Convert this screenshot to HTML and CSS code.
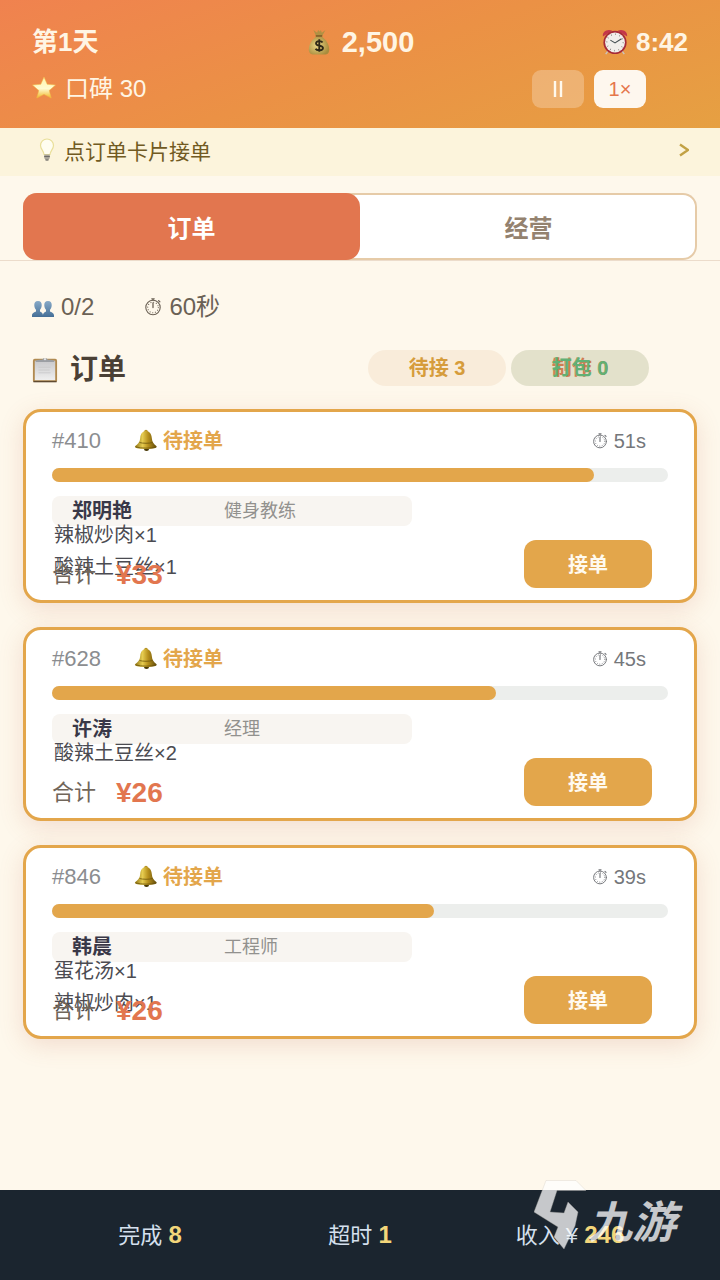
FILE: index.html
```html
<!DOCTYPE html>
<html lang="zh-CN">
<head>
<meta charset="utf-8">
<meta name="viewport" content="width=device-width, initial-scale=1">
<title>订单</title>
<link rel="stylesheet" href="styles.css">
</head>
<body>
<svg class="defs" aria-hidden="true">
  <defs>
    <linearGradient id="gold" x1="0" y1="0" x2="1" y2="0">
      <stop offset="0" stop-color="#8f7415"/><stop offset=".35" stop-color="#e6cc50"/><stop offset=".6" stop-color="#b8911c"/><stop offset="1" stop-color="#5f4a0c"/>
    </linearGradient>
    <linearGradient id="star" x1="0" y1="0" x2="0" y2="1">
      <stop offset="0" stop-color="#fff3a8"/><stop offset=".55" stop-color="#fffbd0"/><stop offset="1" stop-color="#f2b72c"/>
    </linearGradient>
    <linearGradient id="blue" x1="0" y1="0" x2="0" y2="1">
      <stop offset="0" stop-color="#88aac8"/><stop offset="1" stop-color="#456f97"/>
    </linearGradient>
    <linearGradient id="paper" x1="0" y1="0" x2="0" y2="1">
      <stop offset="0" stop-color="#c9c9cb"/><stop offset="1" stop-color="#efefef"/>
    </linearGradient>
    <radialGradient id="bag" cx=".4" cy=".5" r=".6">
      <stop offset="0" stop-color="#e9d585"/><stop offset="1" stop-color="#a98c3c"/>
    </radialGradient>
  </defs>
  <symbol id="i-bell" viewBox="0 0 24 24">
    <ellipse cx="12.500" cy="19.500" rx="2.500" ry="2.500" fill="#493906"/>
    <circle cx="12" cy="2.500" r="1.800" fill="#b59426"/>
    <path d="M12 2C8.500 2 6.500 5 6.200 9c-.3 4-2.200 6-4.900 8-.8.800-.3 1.600 1 1.900 5 1.400 14 1.400 19 0 1.300-.3 1.800-1.100 1-1.900-2.500-2-4.200-4-4.500-8-.3-4-2.300-7-5.800-7z" fill="url(#gold)"/>
    <path d="M2 18c5 1.500 15 1.500 20 0M5.500 13.500c3 1 10 1 13 0" fill="none" stroke="#6d550b" stroke-width=".8"/>
  </symbol>
  <symbol id="i-watch" viewBox="0 0 18 18">
    <g fill="none" stroke="currentColor" stroke-linecap="round">
      <circle cx="9" cy="9.500" r="7.200" stroke-width="1.100"/>
      <path d="M9 9.500V5M7.800 .8h2.400M9 .8v1.500M14.600 2.600l1.200 1.200" stroke-width="1.300"/>
      <circle cx="9" cy="9.500" r="5.300" stroke-width="1.100" stroke-dasharray=".1 2.675"/>
    </g>
  </symbol>
</svg>

<header class="topbar">
  <div class="topbar-row">
    <strong class="day">第1天</strong>
    <strong class="money">
      <svg class="icon-28" viewBox="0 0 28 28" aria-hidden="true">
        <path d="M8 1l4 3 1-3 2 2 1-2 1 3 4-3-4 7h-6z" fill="#b09143"/>
        <path d="M11 8h6c4 3 8 8 8 14 0 4-2 5.500-5 5.500H8.500c-3 0-5.500-1.500-5.500-5.500C3 16 7 11 11 8z" fill="url(#bag)"/>
        <path d="M10.500 7.500h7" stroke="#7b5a25" stroke-width="1.600"/>
        <path d="M17.800 14.500c-1-2-7-2.200-7 1 0 3.300 7.500 1.700 7.500 5 0 3.200-6.800 3.200-8 .8M14.300 11v13.500" fill="none" stroke="#2f2817" stroke-width="2"/>
      </svg>
      <span>2,500</span>
    </strong>
    <strong class="clock">
      <svg class="icon-28" viewBox="0 0 28 28" aria-hidden="true">
        <path d="M7 23l-3 4M21 23l3 4" stroke="#c9c3c0" stroke-width="1.500"/>
        <path d="M1 8c-1-5 5-8.500 10-6zM27 8c1-5-5-8.500-10-6z" fill="#c4374a"/>
        <circle cx="14" cy="14.500" r="12.500" fill="#a62b38"/>
        <circle cx="14" cy="14.500" r="10.700" fill="#f1eeea"/>
        <circle cx="14" cy="14.500" r="8.800" fill="none" stroke="#77706e" stroke-width="1.600" stroke-dasharray=".7 3.908"/>
        <path d="M9 12l5 3 7-4.500" fill="none" stroke="#444f52" stroke-width="1.200"/>
      </svg>
      <span>8:42</span>
    </strong>
  </div>
  <div class="topbar-row">
    <span class="reputation">
      <svg class="icon-24" viewBox="0 0 24 24" aria-hidden="true"><path d="M12 0l3.200 7.300 8.300.7-6.300 5.500 2 7.500L12 17.300 4.800 21l2-7.500L.5 8l8.300-.7z" fill="url(#star)" stroke="#f0bd45" stroke-width=".5"/></svg>
      <span>口碑 30</span>
    </span>
    <div class="speed">
      <button class="speed-btn" type="button" aria-label="暂停"><svg class="pause" viewBox="0 0 10 16" aria-hidden="true"><path d="M2 0v16M8 0v16" stroke="#fff9ed" stroke-width="2.400"/></svg></button>
      <button class="speed-btn speed-btn-on" type="button">1×</button>
    </div>
  </div>
</header>

<button class="hint" type="button">
  <svg class="icon-24" viewBox="0 0 24 24" aria-hidden="true">
    <path d="M12 1a6.500 6.500 0 0 0-6.500 6.500c0 3.500 3 5 3.500 9h6c.5-4 3.500-5.500 3.500-9A6.500 6.500 0 0 0 12 1z" fill="#fffdf0" stroke="#e9df9a" stroke-width="1.200"/>
    <path d="M9.200 16.500h5.600v3.500L13 22.500h-2L9.200 20z" fill="#aaa59a"/>
    <path d="M9.200 18.500h5.600M10.500 22h3" stroke="#6e6b66"/>
  </svg>
  <span class="hint-text">点订单卡片接单</span>
  <svg class="chevron" viewBox="0 0 10 14" aria-hidden="true"><path d="M1 1.500l8 5.500-8 5.500" fill="none" stroke="#c2a144" stroke-width="2.400"/></svg>
</button>

<nav class="tabs-bar">
  <div class="tabs">
    <button class="tab tab-active" type="button">订单</button>
    <button class="tab" type="button">经营</button>
  </div>
</nav>

<main class="content">
  <div class="stats">
    <span class="stat">
      <svg class="icon-22" viewBox="0 0 22 22" aria-hidden="true">
        <path d="M6 5c-2.700 0-4 2-3.700 4.500.2 2 .8 3.500 1.700 4.300v1.700c-1 .8-4 1-4 4V21h11v-1.500c0-3-2-3.200-3-4v-1.700c.9-.8 1.500-2.300 1.700-4.300C10 7 8.700 5 6 5z" fill="url(#blue)"/>
        <path d="M16 5c-2.700 0-4 2-3.700 4.500.2 2 .8 3.500 1.700 4.300v1.700c-1 .8-3 1-3 4V21h11v-1.500c0-3-3-3.200-4-4v-1.700c.9-.8 1.500-2.300 1.700-4.300C20 7 18.700 5 16 5z" fill="url(#blue)"/>
      </svg>
      <span>0/2</span>
    </span>
    <span class="stat">
      <svg class="icon-18"><use href="#i-watch"/></svg>
      <span>60秒</span>
    </span>
  </div>

  <div class="section-head">
    <h1 class="section-title">
      <svg class="icon-28" viewBox="0 0 28 28" aria-hidden="true">
        <rect x="1" y="2" width="26" height="25" rx="2" fill="#b18a50"/>
        <path d="M1.500 26.500h25" stroke="#604a30" stroke-width="1.500"/>
        <rect x="3" y="4" width="22" height="21" fill="url(#paper)"/>
        <path d="M7 11h13M7 14h12M7 17h13" stroke="#c2c2c4" stroke-width=".7"/>
        <path d="M4 5.500V4c3-1.500 6-.5 7.500-1.500 1-2 4-2 5 0C18 3.500 21 2.500 24 4v1.500z" fill="#9c9fa3"/>
        <circle cx="14" cy="2.300" r="1.200" fill="#e5e5e5"/>
      </svg>
      <span>订单</span>
    </h1>
    <div class="pills">
      <span class="pill pill-wait">待接 3</span>
      <span class="pill-stack">
        <span class="pill pill-cook">制作 0</span>
        <span class="pill pill-pack">打包 0</span>
      </span>
    </div>
  </div>

  <section class="orders">
    <article class="card">
      <div class="card-head">
        <span class="order-id">#410</span>
        <span class="status"><svg class="icon-24"><use href="#i-bell"/></svg><span>待接单</span></span>
        <span class="timer"><svg class="icon-16"><use href="#i-watch"/></svg><span>51s</span></span>
      </div>
      <div class="bar"><div class="bar-fill" style="width:88%"></div></div>
      <div class="customer"><strong class="name">郑明艳</strong><span class="role">健身教练</span></div>
      <div class="card-body">
        <ul class="dishes"><li>辣椒炒肉×1</li><li>酸辣土豆丝×1</li></ul>
        <div class="total"><span>合计</span><strong class="price">¥33</strong></div>
        <button class="accept" type="button">接单</button>
      </div>
    </article>

    <article class="card">
      <div class="card-head">
        <span class="order-id">#628</span>
        <span class="status"><svg class="icon-24"><use href="#i-bell"/></svg><span>待接单</span></span>
        <span class="timer"><svg class="icon-16"><use href="#i-watch"/></svg><span>45s</span></span>
      </div>
      <div class="bar"><div class="bar-fill" style="width:72%"></div></div>
      <div class="customer"><strong class="name">许涛</strong><span class="role">经理</span></div>
      <div class="card-body">
        <ul class="dishes"><li>酸辣土豆丝×2</li></ul>
        <div class="total"><span>合计</span><strong class="price">¥26</strong></div>
        <button class="accept" type="button">接单</button>
      </div>
    </article>

    <article class="card">
      <div class="card-head">
        <span class="order-id">#846</span>
        <span class="status"><svg class="icon-24"><use href="#i-bell"/></svg><span>待接单</span></span>
        <span class="timer"><svg class="icon-16"><use href="#i-watch"/></svg><span>39s</span></span>
      </div>
      <div class="bar"><div class="bar-fill" style="width:62%"></div></div>
      <div class="customer"><strong class="name">韩晨</strong><span class="role">工程师</span></div>
      <div class="card-body">
        <ul class="dishes"><li>蛋花汤×1</li><li>辣椒炒肉×1</li></ul>
        <div class="total"><span>合计</span><strong class="price">¥26</strong></div>
        <button class="accept" type="button">接单</button>
      </div>
    </article>
  </section>
</main>

<footer class="summary">
  <span class="sum">完成 <strong>8</strong></span>
  <span class="sum">超时 <strong>1</strong></span>
  <span class="sum">收入 ¥ <strong>246</strong></span>
  <div class="brand">
    <svg class="brand-mark" viewBox="0 0 52 70" aria-hidden="true"><path d="M12 .5h30L52 10.500H23L16 32l14 1 4-11 10 10-3 14-11 23-10-12 4-10L0 32z" fill="#fff" stroke="#c9c5be" stroke-width=".4"/></svg>
    <span>九游</span>
  </div>
</footer>
</body>
</html>
```
FILE: styles.css
```css
* {
  box-sizing: border-box;
}

body {
  margin: 0;
  min-height: 100vh;
  display: flex;
  flex-direction: column;
  background: #fef8ec;
  color: #4a4035;
  font-family: "Liberation Sans", "Noto Sans CJK SC", sans-serif;
  font-size: 20px;
}

button {
  border: 0;
  padding: 0;
  font: inherit;
  color: inherit;
  cursor: pointer;
}

svg {
  display: block;
  flex: none;
}

.defs { position: absolute; width: 0; height: 0; }
.icon-16 { width: 16px; height: 16px; }
.icon-18 { width: 18px; height: 18px; }
.icon-22 { width: 22px; height: 22px; }
.icon-24 { width: 24px; height: 24px; }
.icon-28 { width: 26px; height: 28px; }

/* Top bar */
.topbar {
  display: flex;
  flex-direction: column;
  gap: 10px;
  padding: 24px 32px 20px;
  background: linear-gradient(160deg, #f0824f 0%, #eb9145 50%, #e6a042 100%);
  color: #fff5e4;
}

.topbar-row {
  display: grid;
  grid-template-columns: 1fr auto 1fr;
  align-items: center;
  min-height: 36px;
  font-size: 26px;
  line-height: 36px;
}

.money {
  display: flex;
  align-items: center;
  gap: 10px;
  font-size: 29px;
}

.clock {
  display: flex;
  align-items: center;
  justify-content: flex-end;
  gap: 8px;
}

.reputation {
  display: flex;
  align-items: center;
  gap: 9px;
  font-size: 24px;
}

.speed {
  grid-column: 3;
  display: flex;
  justify-content: flex-end;
  gap: 10px;
  padding-right: 42px;
}

.speed-btn {
  display: grid;
  place-items: center;
  width: 52px;
  height: 38px;
  border-radius: 9px;
  background: rgba(255, 255, 255, 0.25);
  font-size: 20px;
}

.speed-btn-on {
  background: #fef7ee;
  color: #e5764b;
}

.pause { width: 10px; height: 16px; }

/* Hint */
.hint {
  display: flex;
  align-items: center;
  gap: 5px;
  height: 48px;
  padding: 0 31px 5px 35px;
  background: #fcf4dc;
  color: #715a22;
  font-size: 21px;
  text-align: left;
}

.hint-text { flex: 1; }
.chevron { width: 10px; height: 14px; }

/* Tabs */
.tabs-bar {
  padding: 17px 23px 0;
  border-bottom: 1px solid #ecdccb;
}

.tabs {
  display: grid;
  grid-template-columns: 1fr 1fr;
  height: 67px;
  border-radius: 14px;
  background: #fff;
  box-shadow: inset 0 0 0 2px #e6cba8;
}

.tab {
  border-radius: 14px;
  background: transparent;
  color: #94826f;
  font-size: 24px;
  font-weight: 700;
}

.tab-active {
  background: #e2764f;
  color: #fff;
}

/* Main content */
.content {
  flex: 1;
  padding: 30px 23px 24px;
}

.stats {
  display: flex;
  gap: 50px;
  padding: 0 9px;
  color: #6b6155;
  font-size: 24px;
  line-height: 32px;
}

.stat {
  display: flex;
  align-items: center;
  gap: 7px;
}

.section-head {
  display: flex;
  align-items: center;
  justify-content: space-between;
  margin: 24px 0 20px;
  padding: 0 48px 0 9px;
}

.section-title {
  display: flex;
  align-items: center;
  gap: 12px;
  margin: 0;
  padding-top: 4px;
  font-size: 28px;
  line-height: 38px;
}

.pills {
  display: flex;
  gap: 5px;
}

.pill {
  width: 138px;
  border-radius: 18px;
  font-weight: 700;
  line-height: 36px;
  text-align: center;
}

.pill-stack { display: grid; }
.pill-stack .pill { grid-area: 1 / 1; }
.pill-wait { background: #f9ecda; color: #d69c3b; }
.pill-cook { background: #f7e9da; color: #e2764f; }
.pill-pack { background: rgba(90, 175, 110, 0.13); color: #62b074; }

/* Order cards */
.orders {
  display: flex;
  flex-direction: column;
  gap: 24px;
}

.card {
  padding: 15px 26px 12px;
  border: 3px solid #e3a64b;
  border-radius: 18px;
  background: #fff;
  box-shadow: 0 6px 24px rgba(190, 100, 70, 0.18);
}

.card-head {
  display: grid;
  grid-template-columns: 82px 1fr auto;
  align-items: center;
  margin-bottom: 13px;
  padding-right: 22px;
  line-height: 28px;
}

.order-id {
  color: #8b8d90;
  font-size: 22px;
}

.status {
  display: flex;
  align-items: center;
  gap: 5px;
  color: #e3a64b;
  font-weight: 700;
}

.timer {
  display: flex;
  align-items: center;
  gap: 6px;
  color: #75777b;
}

.bar {
  height: 14px;
  border-radius: 7px;
  background: #eceeec;
}

.bar-fill {
  height: 100%;
  border-radius: 7px;
  background: #e3a64b;
}

.customer {
  display: grid;
  grid-template-columns: 152px 1fr;
  width: 360px;
  max-width: 100%;
  margin-top: 14px;
  padding-left: 20px;
  border-radius: 8px;
  background: #f8f5f1;
  line-height: 30px;
}

.name { color: #393848; }
.role { color: #92918e; font-size: 18px; }

.card-body {
  display: grid;
  grid-template-columns: 1fr auto;
  padding-right: 16px;
}

.dishes {
  grid-area: 1 / 1;
  display: flex;
  flex-direction: column;
  gap: 14px;
  margin: 0;
  padding: 0 2px;
  list-style: none;
  color: #4b4b51;
  line-height: 18px;
}

.total {
  grid-area: 1 / 1;
  align-self: end;
  display: flex;
  align-items: center;
  gap: 20px;
  color: #71665a;
  font-size: 22px;
  line-height: 26px;
}

.price {
  color: #e2764f;
  font-size: 28px;
}

.accept {
  grid-area: 1 / 2;
  width: 128px;
  height: 48px;
  margin-top: 14px;
  padding-bottom: 2px;
  border-radius: 12px;
  background: #e3a64b;
  color: #fffaf0;
  font-weight: 700;
}

/* Footer */
.summary {
  position: relative;
  display: grid;
  grid-template-columns: repeat(3, 1fr);
  align-items: center;
  height: 90px;
  padding: 0 45px 5px;
  background: #1b252f;
  color: #d5e0ee;
  font-size: 22px;
  text-align: center;
}

.sum strong {
  color: #f3d67a;
  font-size: 24px;
}

.brand {
  position: absolute;
  right: 44px;
  bottom: 30px;
  display: flex;
  align-items: flex-end;
  gap: 2px;
  color: #fff;
  font-size: 44px;
  font-style: italic;
  font-weight: 700;
  line-height: 54px;
  opacity: 0.75;
}

.brand-mark { width: 52px; height: 70px; }
```
